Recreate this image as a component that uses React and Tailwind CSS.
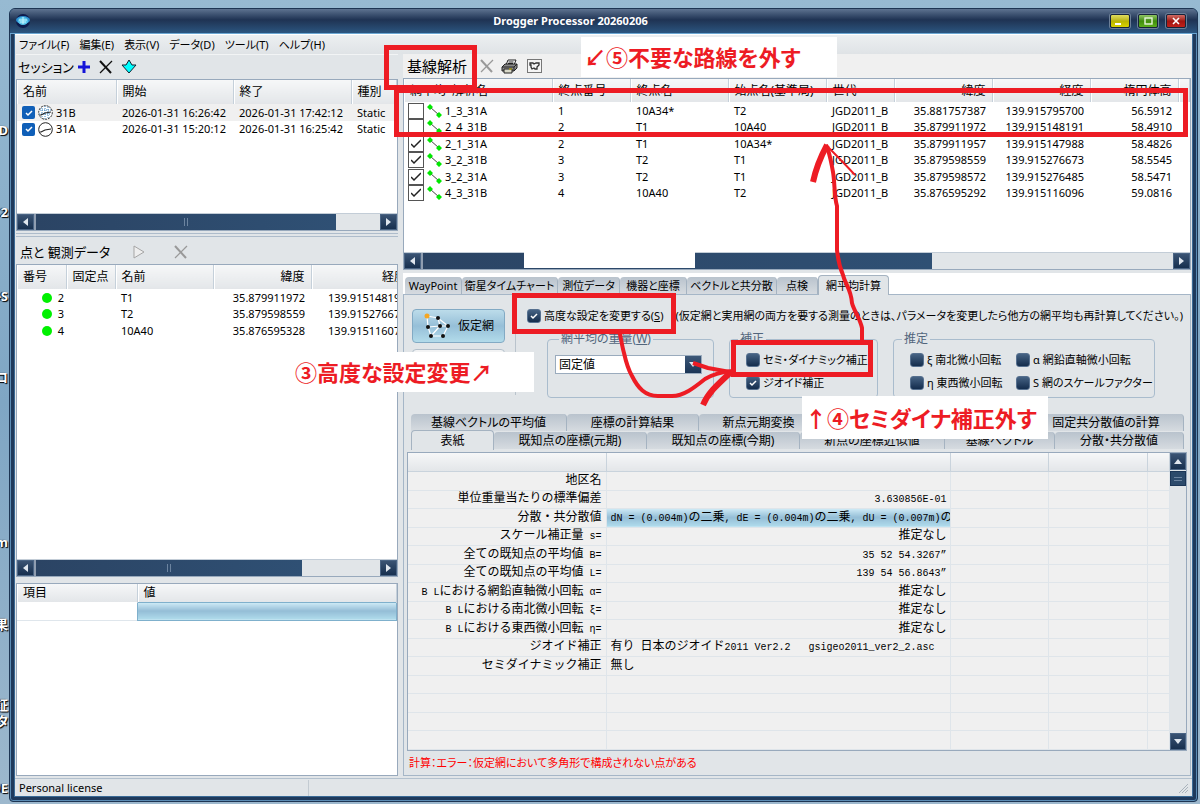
import { clsx } from "clsx";

const SESSIONS = [
  { name: "31B", start: "2026-01-31 16:26:42", end: "2026-01-31 17:42:12", type: "Static", selected: true },
  { name: "31A", start: "2026-01-31 15:20:12", end: "2026-01-31 16:25:42", type: "Static" },
];

const POINTS = [
  { no: "2", name: "T1", lat: "35.879911972", lon: "139.915148191" },
  { no: "3", name: "T2", lat: "35.879598559", lon: "139.915276673" },
  { no: "4", name: "10A40", lat: "35.876595328", lon: "139.915116071" },
];

const BASELINES = [
  { name: "1_3_31A", no: "1", end: "10A34*", start: "T2", lat: "35.881757387", lon: "139.915795700", h: "56.5912", on: false },
  { name: "2_4_31B", no: "2", end: "T1", start: "10A40", lat: "35.879911972", lon: "139.915148191", h: "58.4910", on: false },
  { name: "2_1_31A", no: "2", end: "T1", start: "10A34*", lat: "35.879911957", lon: "139.915147988", h: "58.4826", on: true },
  { name: "3_2_31B", no: "3", end: "T2", start: "T1", lat: "35.879598559", lon: "139.915276673", h: "58.5545", on: true },
  { name: "3_2_31A", no: "3", end: "T2", start: "T1", lat: "35.879598572", lon: "139.915276485", h: "58.5471", on: true },
  { name: "4_3_31B", no: "4", end: "10A40", start: "T2", lat: "35.876595292", lon: "139.915116096", h: "59.0816", on: true },
];

const REPORT = [
  { label: "地区名", value: "" },
  { label: "単位重量当たりの標準偏差", value: "3.630856E-01" },
  { label: "分散・共分散値", value: "dN = (0.004m)の二乗, dE = (0.004m)の二乗, dU = (0.007m)の", left: true, selected: true },
  { label: "スケール補正量 s=", value: "推定なし" },
  { label: "全ての既知点の平均値 B=", value: "35 52 54.3267”" },
  { label: "全ての既知点の平均値 L=", value: "139 54 56.8643”" },
  { label: "B Lにおける網鉛直軸微小回転 α=", value: "推定なし" },
  { label: "B Lにおける南北微小回転 ξ=", value: "推定なし" },
  { label: "B Lにおける東西微小回転 η=", value: "推定なし" },
  { label: "ジオイド補正", value: "有り 日本のジオイド2011 Ver2.2   gsigeo2011_ver2_2.asc", left: true },
  { label: "セミダイナミック補正", value: "無し", left: true },
  {}, {}, {}, {},
];

const MENUS = ["ファイル(F)", "編集(E)", "表示(V)", "データ(D)", "ツール(T)", "ヘルプ(H)"];

const TABS = [
  { label: "WayPoint", w: "w-[57px]" },
  { label: "衛星タイムチャート", w: "w-24" },
  { label: "測位データ", w: "w-[62px]" },
  { label: "機器と座標", w: "w-[67px]" },
  { label: "ベクトルと共分散", w: "w-[90px]" },
  { label: "点検", w: "w-[41px]" },
  { label: "網平均計算", w: "w-[71px]", active: true },
];

const SHEETS_BACK = [
  { label: "基線ベクトルの平均値", w: "w-[156px]" },
  { label: "座標の計算結果", w: "w-[132px]" },
  { label: "新点元期変換", w: "w-[120px]" },
  { label: "", w: "w-[210px]" },
  { label: "固定共分散値の計算", w: "flex-1" },
];

const SHEETS_FRONT = [
  { label: "表紙", w: "w-[83px]", active: true },
  { label: "既知点の座標(元期)", w: "w-[153px]" },
  { label: "既知点の座標(今期)", w: "w-[153px]" },
  { label: "新点の座標近似値", w: "w-[145px]" },
  { label: "基線ベクトル", w: "w-[110px]" },
  { label: "分散・共分散値", w: "flex-1" },
];

const TH = "border-r border-[#c5d0da] bg-linear-to-b from-[#f6f7f8] to-[#e3e6e9] px-[6px] py-0 text-left text-[12px] leading-4 font-normal whitespace-nowrap shadow-[inset_1px_0_0_#fff]";
const TD = "overflow-hidden px-[6px] py-0 text-[11px] leading-4 whitespace-nowrap";
const LIST = "flex flex-col overflow-hidden border border-[#98a9bc] bg-white";

export default function App() {
  return (
    <div className="relative flex min-h-screen w-full overflow-hidden bg-linear-to-b from-[#97bad2] via-[#7fa6c4] to-[#9db8cd] pt-2 pr-[2px] pb-[2px] pl-[9px] font-['Noto_Sans','Noto_Sans_CJK_JP',sans-serif] text-[12px] leading-4 text-black [font-feature-settings:'palt']">
      <DesktopEdge />
      <div className="flex min-w-0 flex-1 flex-col rounded-t-[6px] rounded-b-[4px] border border-[#1d3553] bg-[#3a6a96] px-[5px] pb-[5px] shadow-[inset_0_0_0_1px_#5b8cb5,inset_0_0_0_4px_#1f3a5c]">
        <TitleBar />
        <nav className="flex h-5 shrink-0 items-center gap-[10px] border-t border-white bg-linear-to-b from-[#eceff1] to-[#dfe3e6] px-1 text-[11px]">
          {MENUS.map((m) => <button key={m} type="button">{m}</button>)}
        </nav>
        <main className="flex min-h-0 flex-1 gap-[5px] bg-[#e1e5e8] pb-[2px]">
          <LeftPane />
          <RightPane />
        </main>
        <footer className="flex h-[18px] shrink-0 items-center border-t border-[#b3c1ce] bg-[#e1e5e8] pl-1 text-[11px]">
          <span className="w-[290px] border-r border-[#c3cbd2]">Personal license</span>
          <svg className="mr-1 ml-auto h-[10px] w-[10px]" viewBox="0 0 10 10" stroke="#a9b3bc">
            <path d="M1 10 10 1M4 10 10 4M7 10 10 7" />
          </svg>
        </footer>
      </div>
      <Annotations />
    </div>
  );
}

// Slivers of the desktop icons that stick out left of the window
function DesktopEdge() {
  const label = "absolute right-px text-[13px] leading-[14px] font-bold text-white [text-shadow:1px_1px_1px_#000,-1px_0_1px_#000]";
  return (
    <div className="absolute top-0 left-0 h-full w-[9px] overflow-hidden">
      <span className={clsx(label, "top-[123px]")}>D</span>
      <span className={clsx(label, "top-[205px]")}>2</span>
      <span className={clsx(label, "top-[289px] whitespace-nowrap")}>-S</span>
      <span className={clsx(label, "top-[370px]")}>コ</span>
      <span className={clsx(label, "top-[535px]")}>m</span>
      <span className={clsx(label, "top-[617px]")}>果</span>
      <span className={clsx(label, "top-[698px]")}>証</span>
      <span className={clsx(label, "top-[714px]")}>タ</span>
      <span className={clsx(label, "top-[781px]")}>DE</span>
    </div>
  );
}

function TitleBar() {
  const btn = "grid h-[14px] w-5 place-items-center rounded-[2px] border border-[#16243a] shadow-[0_0_0_1px_#6c7f97]";
  return (
    <header className="-mx-[5px] flex h-[25px] shrink-0 items-center rounded-t-[5px] border-b border-[#6ba7d3] bg-linear-to-b from-[#5e7390] via-[#1f3353] via-45% to-[#2b5680] pr-[11px] pl-[5px]">
      <svg className="h-4 w-4" viewBox="0 0 16 16">
        <circle cx="8" cy="8" r="7" fill="#0d1b4c" />
        <ellipse cx="8" cy="7" rx="7" ry="4" fill="#2d8fd0" />
        <ellipse cx="8" cy="8" rx="5" ry="4" fill="#57c5ea" />
        <path d="M4 7h8M5 9h6M8 4v7" stroke="#c9f5ff" strokeWidth="1" />
      </svg>
      <h1 className="flex-1 text-center text-[11px] font-bold text-white">Drogger Processor 20260206</h1>
      <div className="flex gap-2">
        <button type="button" aria-label="最小化" className={clsx(btn, "bg-linear-to-b from-[#e0dc5c] via-[#b9b300] to-[#d8d100]")}>
          <svg className="h-2 w-[11px]" viewBox="0 0 11 8"><path d="M0 7h6" stroke="#fff" strokeWidth="2" /></svg>
        </button>
        <button type="button" aria-label="最大化" className={clsx(btn, "bg-linear-to-b from-[#8fc561] via-[#3f8c0a] to-[#5cae1d]")}>
          <svg className="h-2 w-[10px]" viewBox="0 0 10 8"><rect x="2" y="1" width="7" height="6" fill="none" stroke="#e8f5dc" strokeWidth="1.4" /></svg>
        </button>
        <button type="button" aria-label="閉じる" className={clsx(btn, "bg-linear-to-b from-[#cf6a64] via-[#a11410] to-[#c0211b]")}>
          <svg className="h-2 w-2" viewBox="0 0 8 8"><path d="M1 1l6 6M7 1 1 7" stroke="#fff" strokeWidth="1.6" /></svg>
        </button>
      </div>
    </header>
  );
}

function LeftPane() {
  return (
    <section className="flex w-[383px] shrink-0 flex-col pl-px">
      <div className="flex h-[25px] shrink-0 items-center gap-2 border-t border-[#f2f4f5] pl-[2px]">
        <span className="w-[51px] text-[13px] whitespace-nowrap">セッション</span>
        <button type="button" aria-label="追加">
          <svg className="h-[14px] w-[14px]" viewBox="0 0 14 14"><path d="M7 1v12M1 7h12" stroke="#1414d8" strokeWidth="3" /></svg>
        </button>
        <button type="button" aria-label="削除"><Cross color="#111" /></button>
        <button type="button" aria-label="取込">
          <svg className="h-4 w-4" viewBox="0 0 16 16"><path d="M8 1l3 5h4l-7 8-7-8h4z" fill="#00ffff" stroke="#123" strokeWidth="1" /></svg>
        </button>
      </div>

      <div className={clsx(LIST, "h-[152px] shrink-0")}>
        <div className="flex-1 overflow-hidden">
          <table className="w-full table-fixed border-collapse">
            <colgroup><col className="w-[99px]" /><col className="w-[117px]" /><col className="w-[118px]" /><col /></colgroup>
            <thead><tr className="h-6"><th className={TH}>名前</th><th className={TH}>開始</th><th className={TH}>終了</th><th className={TH}>種別</th></tr></thead>
            <tbody>
              {SESSIONS.map((s) => (
                <tr key={s.name} className={clsx("odd:h-[17px] even:h-4", s.selected && "bg-[#f0f0f0]")}>
                  <td className={TD}>
                    <div className="-ml-px flex items-center gap-[3px]">
                      <Tick kind="blue" label={s.name} checked />
                      <Clock dotted={s.selected} />
                      <span>{s.name}</span>
                    </div>
                  </td>
                  <td className={TD}>{s.start}</td>
                  <td className={TD}>{s.end}</td>
                  <td className={TD}>{s.type}</td>
                </tr>
              ))}
            </tbody>
          </table>
        </div>
        <HScroll thumb="w-[302px]" />
      </div>

      <div className="my-[2px] h-1 shrink-0 border-y border-[#aebccb]" />

      <div className="flex h-[25px] shrink-0 items-center pl-1">
        <span className="text-[13px]">点と 観測データ</span>
        <button type="button" aria-label="実行" className="ml-[22px]">
          <svg className="h-[14px] w-[14px]" viewBox="0 0 14 14"><path d="M2 1v12l10-6z" fill="#eee" stroke="#a5a5a5" /></svg>
        </button>
        <button type="button" aria-label="削除" className="ml-7"><Cross color="#999" /></button>
      </div>

      <div className={clsx(LIST, "min-h-[200px] flex-1")}>
        <div className="flex-1 overflow-hidden">
          <table className="w-[396px] table-fixed border-collapse">
            <colgroup><col className="w-[49px]" /><col className="w-[49px]" /><col className="w-[98px]" /><col className="w-[98px]" /><col /></colgroup>
            <thead>
              <tr className="h-6">
                <th className={TH}>番号</th><th className={TH}>固定点</th><th className={TH}>名前</th>
                <th className={clsx(TH, "text-right")}>緯度</th><th className={clsx(TH, "text-right")}>経度</th>
              </tr>
            </thead>
            <tbody>
              {POINTS.map((p) => (
                <tr key={p.no} className="odd:h-[17px] even:h-4">
                  <td className={clsx(TD, "pr-0")}>
                    <div className="flex items-center justify-end gap-[6px] pr-[2px]">
                      <span className="h-[10px] w-[10px] rounded-full bg-[#00f000]" />{p.no}
                    </div>
                  </td>
                  <td className={TD} />
                  <td className={TD}>{p.name}</td>
                  <td className={clsx(TD, "text-right")}>{p.lat}</td>
                  <td className={clsx(TD, "text-right")}>{p.lon}</td>
                </tr>
              ))}
            </tbody>
          </table>
        </div>
        <HScroll thumb="w-[268px]" />
      </div>

      <div className={clsx(LIST, "mt-[6px] h-[193px] shrink-0")}>
        <table className="w-full table-fixed border-collapse">
          <colgroup><col className="w-[120px]" /><col /></colgroup>
          <thead>
            <tr className="h-[18px]">
              <th className={TH}>項目</th>
              <th className={TH}>値</th>
            </tr>
          </thead>
          <tbody>
            <tr className="h-[18px] border-b border-[#dfe6ec]">
              <td />
              <td className="border border-[#7fb0cc] bg-linear-to-b from-[#d0ecf7] via-[#94bdd6] to-[#b0dcec]" />
            </tr>
          </tbody>
        </table>
      </div>
    </section>
  );
}

function RightPane() {
  return (
    <section className="flex min-w-0 flex-1 flex-col pr-px">
      <div className="flex h-6 shrink-0 items-center bg-[#f0f0f0] pl-1">
        <span className="w-[73px] text-[15px]">基線解析</span>
        <button type="button" aria-label="削除"><Cross color="#999" /></button>
        <button type="button" aria-label="印刷" className="ml-[7px]"><Printer /></button>
        <button type="button" aria-label="検査" className="ml-[9px]">
          <svg className="h-[14px] w-[15px]" viewBox="0 0 15 14" fill="none" stroke="#333">
            <rect x=".5" y=".5" width="14" height="13" fill="#f5f5f5" stroke="#777" />
            <path d="M3 4h3l1 1 2-1h3v2l-2 2v2H8L7 9 5 10 4 8V6H3z" strokeWidth="1.3" />
          </svg>
        </button>
      </div>

      <div className={clsx(LIST, "h-[192px] shrink-0")}>
        <div className="flex-1 overflow-hidden">
          <table className="w-full table-fixed border-collapse">
            <colgroup>
              <col className="w-[148px]" /><col className="w-[78px]" /><col className="w-[98px]" /><col className="w-[98px]" />
              <col className="w-[68px]" /><col className="w-[98px]" /><col className="w-[98px]" /><col className="w-[88px]" /><col />
            </colgroup>
            <thead>
              <tr className="h-[23px]">
                <th className={TH}>網平均・解析名</th><th className={TH}>終点番号</th><th className={TH}>終点名</th>
                <th className={TH}>始点名(基準局)</th><th className={TH}>世代</th>
                <th className={clsx(TH, "text-right")}>緯度</th><th className={clsx(TH, "text-right")}>経度</th>
                <th className={clsx(TH, "text-right")}>楕円体高</th><th className={TH} />
              </tr>
            </thead>
            <tbody>
              {BASELINES.map((b) => (
                <tr key={b.name} className="odd:h-[17px] even:h-4">
                  <td className={TD}>
                    <div className="-ml-[2px] flex items-center gap-[3px]">
                      <Tick kind="plain" label={b.name} checked={b.on} />
                      <svg className="h-[14px] w-[15px]" viewBox="0 0 15 14">
                        <path d="M3 3 12 11" stroke="#444" />
                        <path d="M3 0l3 3-3 3-3-3zM12 8l3 3-3 3-3-3z" fill="#00e800" />
                      </svg>
                      <span>{b.name}</span>
                    </div>
                  </td>
                  <td className={TD}>{b.no}</td>
                  <td className={TD}>{b.end}</td>
                  <td className={TD}>{b.start}</td>
                  <td className={TD}>JGD2011_B</td>
                  <td className={clsx(TD, "text-right")}>{b.lat}</td>
                  <td className={clsx(TD, "text-right")}>{b.lon}</td>
                  <td className={clsx(TD, "text-right")}>{b.h}</td>
                  <td />
                </tr>
              ))}
            </tbody>
          </table>
        </div>
        <HScroll thumb="w-[511px]" gap />
      </div>

      <div role="tablist" className="mt-[3px] flex h-[22px] shrink-0 items-end border-b border-[#a5b6c7] bg-white pl-[2px] text-[11px]">
        {TABS.map((t) => <Tab key={t.label} {...t} />)}
      </div>
      <div className="flex min-h-0 flex-1 flex-col border border-t-0 border-[#a5b6c7] px-[3px]">
        <Settings />
        <div role="tablist" className="mt-[7px] flex h-[18px] shrink-0 items-end pr-[3px] pl-1">
          {SHEETS_BACK.map((t, i) => <Tab key={i} {...t} />)}
        </div>
        <div role="tablist" className="flex h-[18px] shrink-0 items-end pr-[3px] pl-1">
          {SHEETS_FRONT.map((t) => <Tab key={t.label} {...t} />)}
        </div>
        <Report />
        <p className="flex h-6 shrink-0 items-center pl-[2px] text-[11px] text-[#ff0000]">計算：エラー：仮定網において多角形で構成されない点がある</p>
      </div>
    </section>
  );
}

function Settings() {
  const group = "h-[67px] min-w-0 rounded-[4px] border border-[#a9bccd]";
  const legend = "px-[2px] text-[12px] leading-4 text-[#52657c]";
  return (
    <div className="flex h-[111px] shrink-0 pt-3">
      <div className="flex h-[88px] w-[109px] shrink-0 flex-col gap-[6px] border-r border-[#b9c3cc] pt-[2px] pr-[10px] pl-[5px]">
        <button type="button" className="flex h-[34px] items-center gap-2 rounded-[4px] border border-[#82aac4] bg-linear-to-b from-[#bcdcea] via-[#96bfd8] to-[#b2dbea] pl-[11px]">
          <Network /> 仮定網
        </button>
        <button type="button" aria-label="実用網" className="flex h-[34px] items-center rounded-[4px] border border-[#b4c0cb] bg-[#f2f3f4] pl-[11px]">
          <Network />
        </button>
      </div>
      <div className="min-w-0 flex-1 pl-[11px]">
        <div className="flex h-[17px] items-center gap-3 overflow-hidden text-[11px] whitespace-nowrap">
          <Tick kind="navy" checked>高度な設定を変更する(<u>S</u>)</Tick>
          <span>(仮定網と実用網の両方を要する測量のときは、パラメータを変更したら他方の網平均も再計算してください。)</span>
        </div>
        <div className="mt-[7px] flex gap-[15px] pl-5">
          <fieldset className={clsx(group, "w-[167px] px-[7px]")}>
            <legend className={clsx(legend, "ml-1")}>網平均の重量(<u>W</u>)</legend>
            <div className="relative mt-2 w-[147px]">
              <select aria-label="網平均の重量" className="h-[19px] w-full appearance-none border border-[#9aabbd] bg-white pl-[3px] text-[12px] leading-4">
                <option>固定値</option>
              </select>
              <span className="pointer-events-none absolute top-px right-px grid h-[17px] w-4 place-items-center bg-linear-to-b from-[#3d5878] to-[#1b3556]">
                <svg className="h-[5px] w-2" viewBox="0 0 8 5"><path d="M0 0h8L4 5z" fill="#dfe8f0" /></svg>
              </span>
            </div>
          </fieldset>
          <fieldset className={clsx(group, "w-[149px] px-4")}>
            <legend className={clsx(legend, "-ml-2")}>補正</legend>
            <div className="mt-[5px] flex flex-col gap-[7px]">
              <Tick kind="navy">セミ・ダイナミック補正</Tick>
              <Tick kind="navy" checked>ジオイド補正</Tick>
            </div>
          </fieldset>
          <fieldset className={clsx(group, "w-[262px] pl-4")}>
            <legend className={clsx(legend, "-ml-2")}>推定</legend>
            <div className="mt-[5px] grid grid-cols-[106px_1fr] gap-y-[7px]">
              <Tick kind="navy">ξ 南北微小回転</Tick>
              <Tick kind="navy">α 網鉛直軸微小回転</Tick>
              <Tick kind="navy">η 東西微小回転</Tick>
              <Tick kind="navy">S 網のスケールファクター</Tick>
            </div>
          </fieldset>
        </div>
      </div>
    </div>
  );
}

function Report() {
  const cell = "border-r border-b border-[#dfe5ea] p-0";
  return (
    <div className="mt-[3px] flex min-h-[290px] flex-1 overflow-hidden border border-[#98a9bc] bg-[#f0f0f0]">
      <div className="min-w-0 flex-1">
        <table className="w-full table-fixed border-collapse">
          <colgroup><col className="w-[198px]" /><col className="w-[344px]" /><col className="w-[98px]" /><col className="w-[99px]" /><col /></colgroup>
          <thead>
            <tr className="h-[18px]">
              {[0, 1, 2, 3, 4].map((i) => <th key={i} className="border-r border-b border-[#c9d3dc] bg-linear-to-b from-[#f6f7f8] to-[#e3e6e9]" />)}
            </tr>
          </thead>
          <tbody>
            {REPORT.map((r, i) => (
              <tr key={i} className="odd:h-[19px] even:h-[18px]">
                <td className={clsx(cell, "pr-1 text-right")}><FixedPitch text={r.label} /></td>
                <td className={clsx(cell, r.left ? "pl-1" : "pr-[3px] text-right", r.selected && "border border-[#7fb0cc] bg-linear-to-b from-[#d0ecf7] via-[#94bdd6] to-[#b0dcec]")}>
                  <FixedPitch text={r.value} />
                </td>
                <td className={cell} /><td className={cell} /><td className={cell} />
              </tr>
            ))}
          </tbody>
        </table>
      </div>
      <div role="scrollbar" aria-orientation="vertical" aria-controls="report" aria-valuenow={0} className="flex w-4 shrink-0 flex-col bg-[#e1e5e8]">
        <ScrollButton label="上へ" d="M0 6h8L4 1z" size="h-[17px]" />
        <div className="mt-px grid h-[15px] place-items-center border border-[#1b3556] bg-[#2c4a6b]">
          <span className="h-1 w-2 border-y border-[#6c84a0]" />
        </div>
        <div className="mt-auto flex flex-col"><ScrollButton label="下へ" d="M0 1h8L4 6z" size="h-[17px]" /></div>
      </div>
    </div>
  );
}

// Latin in a 6px pitch, full-width characters in a 12px pitch
function FixedPitch({ text = "" }) {
  const runs = text.match(/[\u3000-\u9fff・]+|[^\u3000-\u9fff・]+/g) || [];
  return (
    <span className="block h-4 overflow-hidden whitespace-pre font-['Liberation_Mono','Noto_Sans_CJK_JP',monospace] leading-4 [font-feature-settings:normal]">
      {runs.map((run, i) => (
        <span key={i} className={/[\u3000-\u9fff]/.test(run) ? "text-[12px]" : "text-[10px]"}>{run}</span>
      ))}
    </span>
  );
}

function Tab({ label, w, active }) {
  return (
    <button
      type="button"
      role="tab"
      aria-selected={!!active}
      className={clsx(
        "overflow-hidden rounded-t-[4px] border-r border-[#a5b3c1] leading-4 whitespace-nowrap",
        active ? "z-10 -mb-px h-5 border-t border-l bg-[#e1e5e8]" : "h-[17px] bg-linear-to-b from-[#b9c3cd] to-[#d6dbe0]",
        w,
      )}
    >
      {label}
    </button>
  );
}

function Tick({ kind, label, checked = false, children }) {
  const box = {
    blue: "h-[13px] w-[13px] rounded-[2px] bg-[#0f5fb8]",
    plain: "h-4 w-4 border border-[#555] bg-white",
    navy: "h-[14px] w-[14px] rounded-[3px] border border-[#56708f] bg-linear-to-b from-[#466384] to-[#142d4d]",
  }[kind];
  return (
    <label className="flex h-4 items-center gap-[3px] text-[11px] leading-4 whitespace-nowrap">
      <span className="relative grid place-items-center">
        <input type="checkbox" aria-label={label} defaultChecked={checked} className={clsx("peer appearance-none", box)} />
        <svg className="pointer-events-none absolute hidden h-[10px] w-[10px] peer-checked:block" viewBox="0 0 10 10" fill="none" stroke={kind === "plain" ? "#222" : "#fff"} strokeWidth="1.5">
          <path d={kind === "plain" ? "M0 5l3 3 7-7" : "M2 5l2 2 4-4"} />
        </svg>
      </span>
      {children && <span>{children}</span>}
    </label>
  );
}

function HScroll({ thumb, gap }) {
  return (
    <div role="scrollbar" aria-orientation="horizontal" aria-controls="list" aria-valuenow={0} className="flex h-[17px] shrink-0 border-t border-[#c3cdd7] bg-[#e1e5e8]">
      <ScrollButton label="左へ" d="M6 0v8L1 4z" size="w-[17px]" />
      <div className={clsx("relative grid place-items-center border-l-2 border-[#8f9db0] bg-linear-to-r from-[#2b4464] to-[#2f5074]", thumb)}>
        {gap
          ? <span className="absolute top-[-1px] left-[101px] h-4 w-[171px] bg-white" />
          : <span className="h-2 w-1 border-x border-[#6c84a0]" />}
      </div>
      <div className="ml-auto flex"><ScrollButton label="右へ" d="M1 0v8l5-4z" size="w-[17px]" /></div>
    </div>
  );
}

function ScrollButton({ label, d, size }) {
  return (
    <button type="button" aria-label={label} className={clsx("grid place-items-center border border-[#4a6484] bg-linear-to-b from-[#3a5373] to-[#17304f]", size)}>
      <svg className="h-2 w-2" viewBox="0 0 8 8"><path d={d} fill="#dfe6ee" /></svg>
    </button>
  );
}

function Cross({ color }) {
  return (
    <svg className="h-[14px] w-[14px]" viewBox="0 0 14 14" fill="none" stroke={color}>
      <path d="M1 1 12 13" strokeWidth="2" />
      <path d="M13 1 1 13" strokeWidth="1.2" />
    </svg>
  );
}

function Clock({ dotted }) {
  return (
    <svg className="h-[15px] w-[15px]" viewBox="0 0 15 15" fill="none" stroke="#222">
      <circle cx="7.5" cy="7.5" r="6.8" fill="#fff" strokeDasharray={dotted ? "2 1" : undefined} />
      {dotted && <path d="M4 3v9M7 1v13M10 2v11M2 5h11M1 9h12" stroke="#3f86c0" strokeDasharray="1 1" />}
      <path d="M3 10l4-2 6-1M3 10l-1 0" strokeWidth="1.1" />
    </svg>
  );
}

function Printer() {
  return (
    <svg className="h-[15px] w-[17px]" viewBox="0 0 17 15" stroke="#222" strokeWidth="1">
      <path d="M5 6 7 1h8l-2 5z" fill="#fff" />
      <path d="M7.500 3h5M7 4.500h5" />
      <path d="M1 8l3-3h12v4l-3 3H1z" fill="#8a8a8a" />
      <path d="M1 8h12v4M13 8l3-3" fill="none" />
      <path d="M3 10h8v4H3z" fill="#d8d8c8" />
      <path d="M8 10h3" stroke="#c9b400" />
    </svg>
  );
}

function Network() {
  return (
    <svg className="h-7 w-[26px]" viewBox="0 0 26 28">
      <path d="M3 4 14 6 24 14 19 24H7L4 15 3 4M4 15l12-1h8M14 6l2 8M16 14 7 24" fill="none" stroke="#fff" strokeWidth="1.2" />
      {[[14, 6], [24, 14], [19, 24], [7, 24], [4, 15], [16, 14]].map(([x, y]) => <circle key={`${x}-${y}`} cx={x} cy={y} r="2" fill="#111" />)}
      <circle cx="3" cy="4" r="2.500" fill="#f5a623" />
    </svg>
  );
}

// Hand-made notes drawn over the window
function Annotations() {
  const frame = "absolute border-[5px] border-[#ed1c24]";
  const note = "absolute flex items-center bg-white pl-[3px] text-[22px] leading-8 font-bold whitespace-nowrap text-[#ed1c24]";
  return (
    <div className="pointer-events-none absolute inset-0 z-20">
      <div className={clsx(note, "top-[37px] left-[581px] h-10 w-64")}>↙⑤不要な路線を外す</div>
      <div className={clsx(note, "top-[352px] left-[292px] h-10 w-[242px]")}>③高度な設定変更↗</div>
      <div className={clsx(note, "top-[396px] left-[802px] h-[43px] w-[246px]")}>↑④セミダイナ補正外す</div>
      <div className={clsx(frame, "top-[45px] left-[384px] h-[45px] w-[93px]")} />
      <div className={clsx(frame, "top-[88px] left-[394px] h-[49px] w-[794px]")} />
      <div className={clsx(frame, "top-[293px] left-[512px] h-[41px] w-[164px]")} />
      <div className={clsx(frame, "top-[340px] left-[731px] h-[37px] w-[142px]")} />
      <svg className="absolute top-0 left-0 h-[804px] w-[1200px]" viewBox="0 0 1200 804" fill="none" stroke="#ed1c24" strokeLinejoin="round">
        <path d="M619 330C621 338 622 346 624 353C626 362 628 369 632 376C638 388 645 396 658 396H672C684 396 695 387 705 379C713 374 722 372 732 371" strokeWidth="4" />
        <path d="M693 363 708 368 730 372" strokeWidth="4" />
        <path d="M703 405C708 393 717 385 731 372" strokeWidth="6" />
        <path d="M862 342V328C860 318 854 311 852 303C851 289 845 284 843 275C840 268 838 260 837 250V206C834 196 835 184 833 172C831 162 830 153 826 145" strokeWidth="4" />
        <path d="M813 182C816 168 820 158 827 145" strokeWidth="6" />
        <path d="M826 145C834 153 844 163 855 175" strokeWidth="2" />
      </svg>
    </div>
  );
}
